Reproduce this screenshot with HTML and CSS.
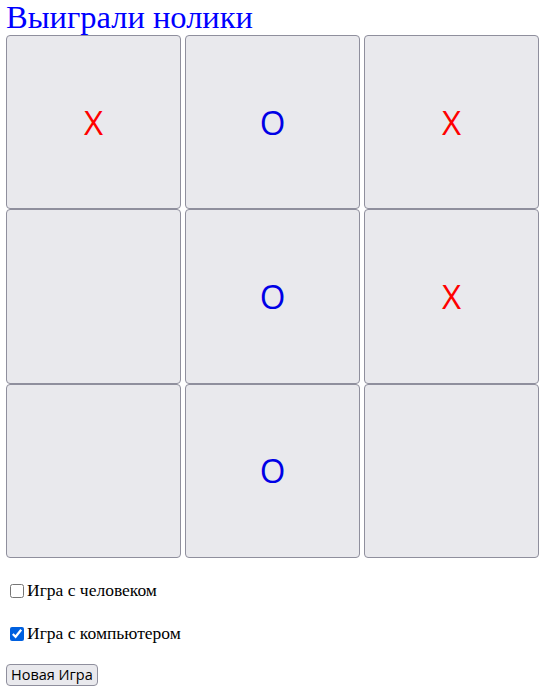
FILE: index.html
```html
<!DOCTYPE html>
<html lang="ru">
<head>
<meta charset="utf-8">
<title>Крестики-нолики</title>
<link rel="stylesheet" href="styles.css">
</head>
<body>
<div class="page">
  <h1 class="status">Выиграли нолики</h1>
  <div class="board">
    <button class="cell x">X</button>
    <button class="cell o">O</button>
    <button class="cell x">X</button>
    <button class="cell"></button>
    <button class="cell o">O</button>
    <button class="cell x">X</button>
    <button class="cell"></button>
    <button class="cell o">O</button>
    <button class="cell"></button>
  </div>
  <div class="options">
    <label class="opt"><input type="checkbox" class="chk">Игра с человеком</label>
    <label class="opt"><input type="checkbox" class="chk" checked>Игра с компьютером</label>
  </div>
  <button class="new-game">Новая Игра</button>
</div>
</body>
</html>
```

FILE: styles.css
```css
html, body {
  margin: 0;
  padding: 0;
  background: #ffffff;
}
.page {
  padding: 0 6px;
  font-family: "Liberation Serif", "Times New Roman", serif;
}
.status {
  margin: 0;
  height: 35px;
  font-family: "Liberation Serif", "Times New Roman", serif;
  font-weight: normal;
  font-size: 32.5px;
  line-height: 35px;
  color: #0000ff;
}
.board {
  display: grid;
  grid-template-columns: repeat(3, 175px);
  grid-template-rows: repeat(3, 174.4px);
  column-gap: 4px;
  row-gap: 0;
}
.cell {
  margin: 0;
  padding: 0;
  background: #e9e9ed;
  border: 1px solid #8f8f9d;
  border-radius: 4px;
  font-family: "Open Sans", "Noto Sans", sans-serif;
  font-size: 33px;
  line-height: 1;
  display: flex;
  align-items: center;
  justify-content: center;
}
.cell.x { color: #ff0000; }
.cell.o { color: #0000e6; }
.options {
  display: flex;
  flex-direction: column;
  gap: 24px;
  padding-top: 23px;
}
.opt {
  display: flex;
  align-items: center;
  height: 19px;
  font-size: 17.5px;
  color: #000;
}
.chk {
  width: 14px;
  height: 14px;
  margin: 0 3px 0 4px;
  accent-color: #0060df;
}
.new-game {
  margin-top: 21px;
  padding: 1px 4px;
  height: 22px;
  background: #e9e9ed;
  border: 1px solid #8f8f9d;
  border-radius: 4px;
  font-family: "Open Sans", "Noto Sans", sans-serif;
  font-size: 14.5px;
  line-height: 18px;
  color: #000;
}
```
